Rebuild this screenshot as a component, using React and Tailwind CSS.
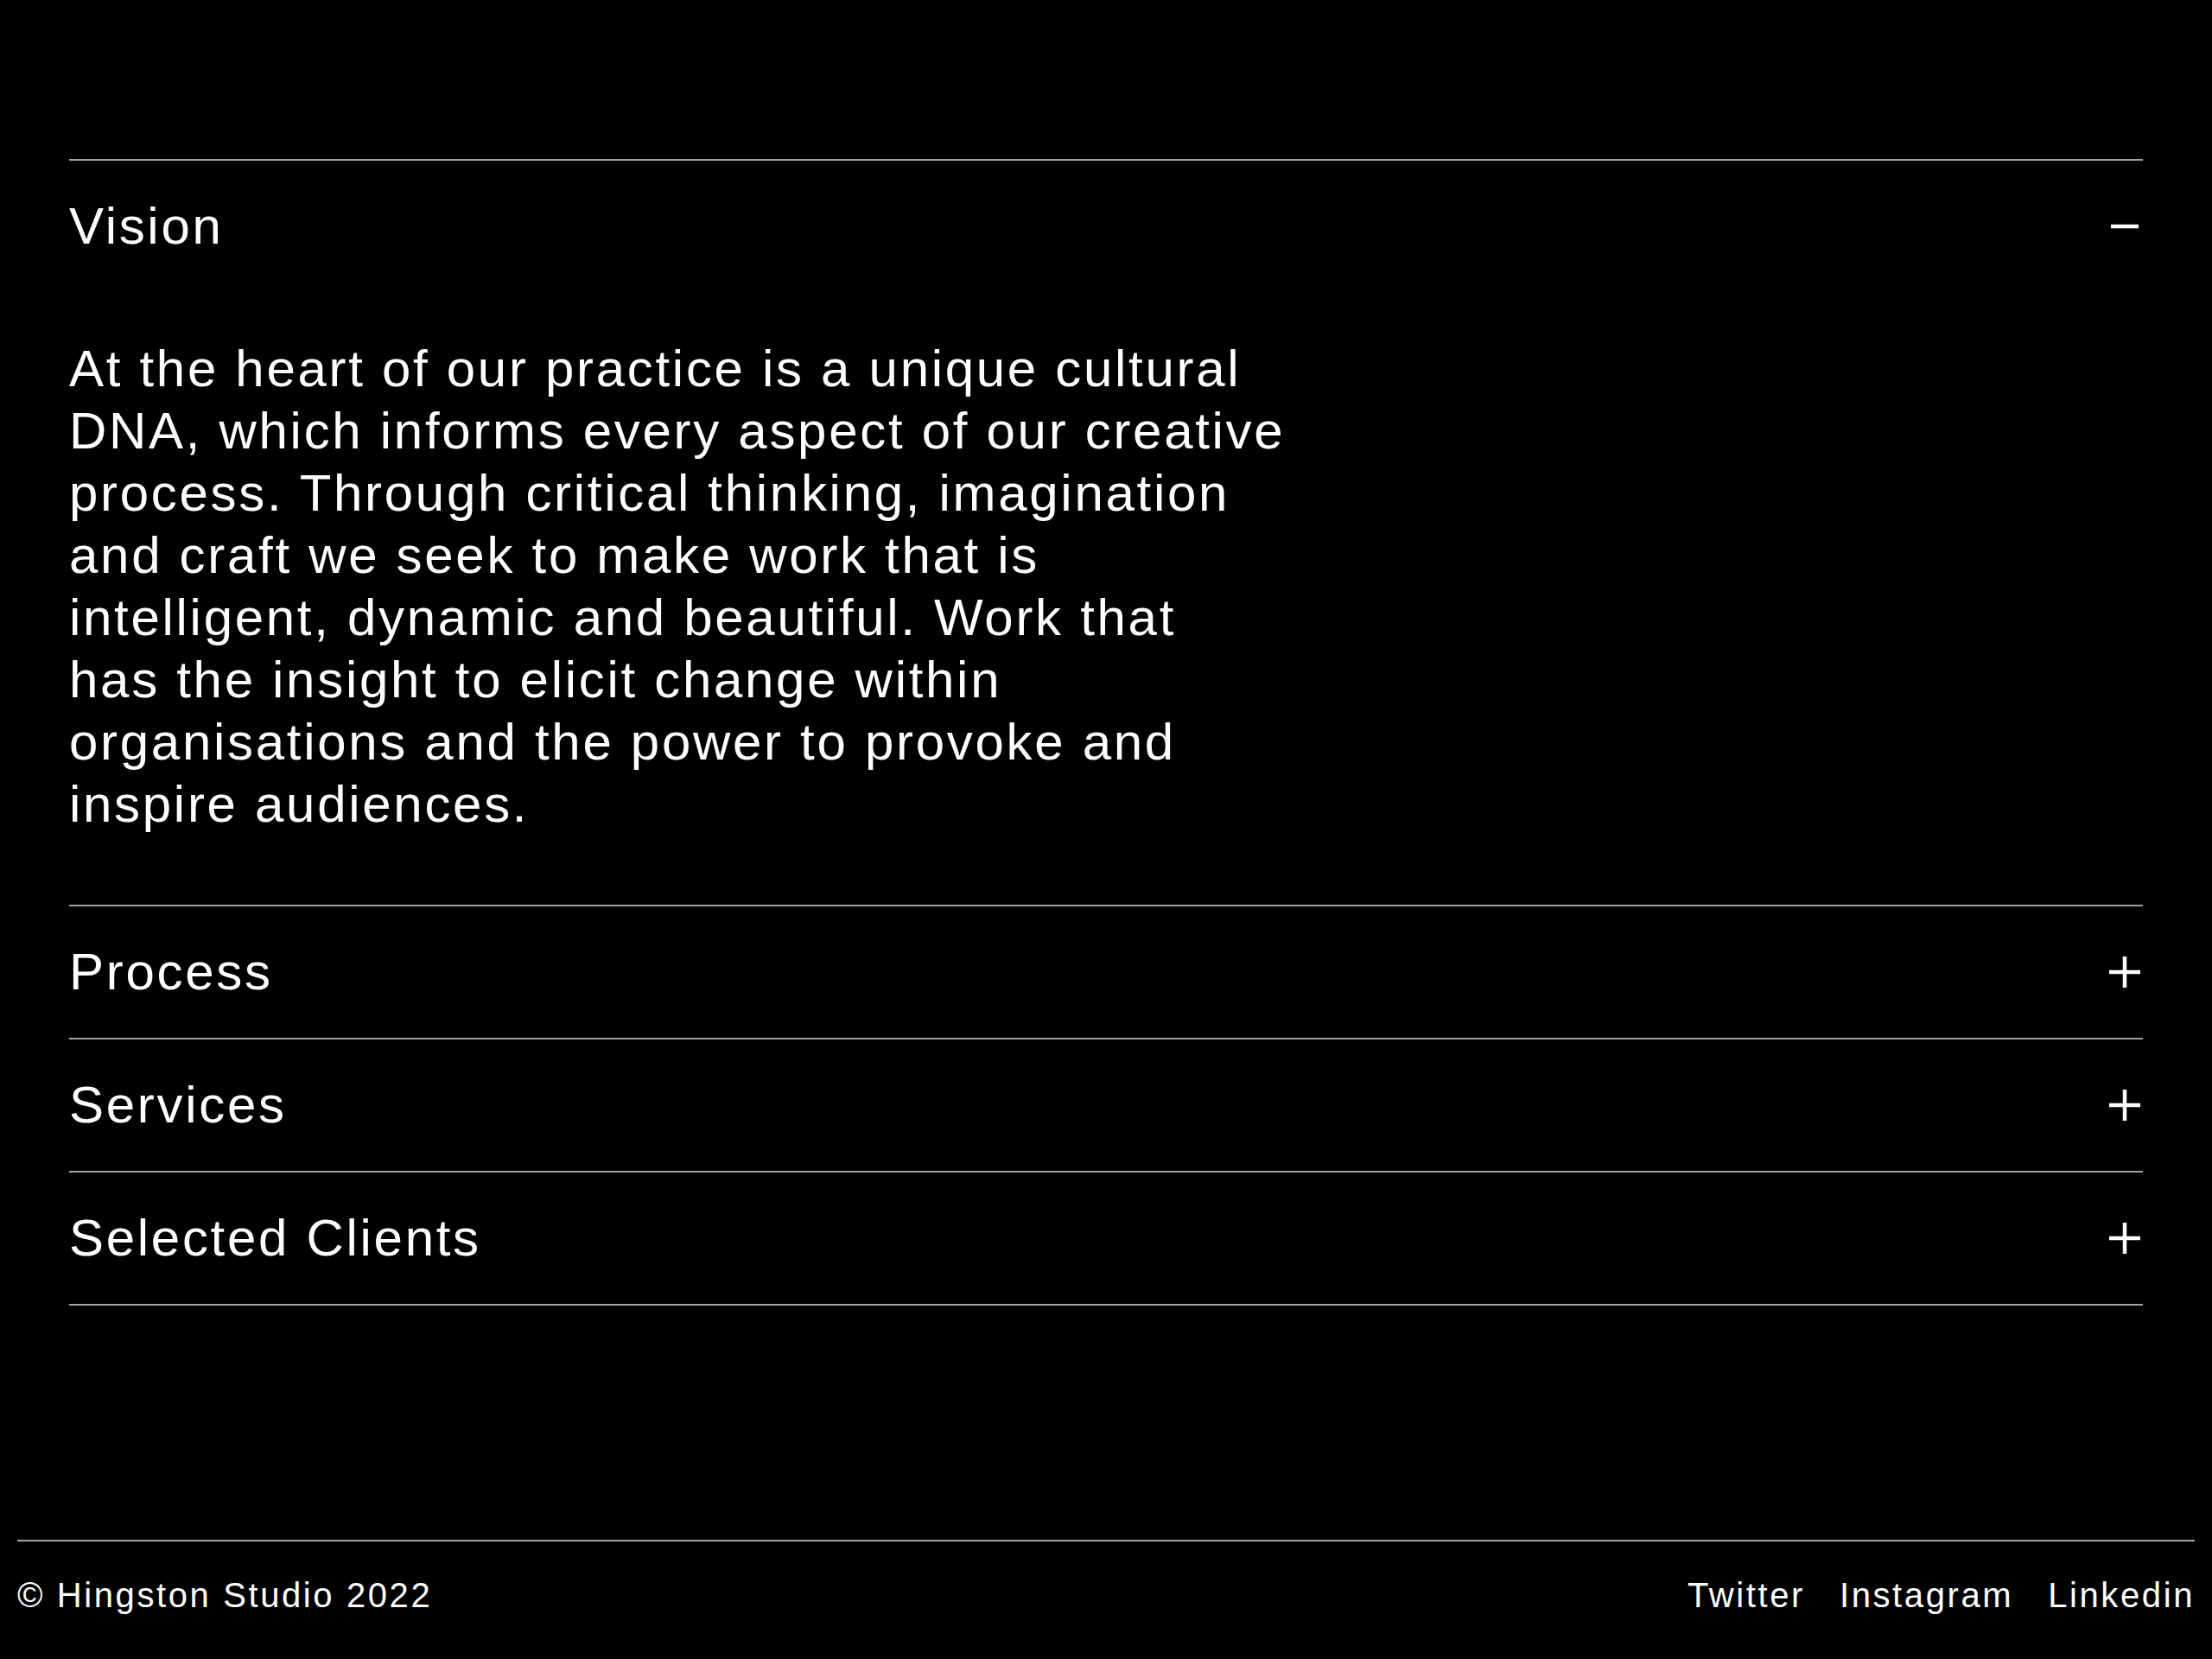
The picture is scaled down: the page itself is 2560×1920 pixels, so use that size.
import React from "react";

const lines = [
  "At the heart of our practice is a unique cultural",
  "DNA, which informs every aspect of our creative",
  "process. Through critical thinking, imagination",
  "and craft we seek to make work that is",
  "intelligent, dynamic and beautiful. Work that",
  "has the insight to elicit change within",
  "organisations and the power to provoke and",
  "inspire audiences.",
];

function Icon({ open }) {
  return (
    <svg width="40" height="40" viewBox="0 0 40 40" className="shrink-0 mr-[1px]">
      {open ? (
        <line x1="4" y1="20" x2="36" y2="20" stroke="white" strokeWidth="4.5" />
      ) : (
        <>
          <line x1="2" y1="20" x2="38" y2="20" stroke="white" strokeWidth="4.5" />
          <line x1="20" y1="2" x2="20" y2="38" stroke="white" strokeWidth="4.5" />
        </>
      )}
    </svg>
  );
}

function Item({ title, open, children }) {
  return (
    <div className="border-t-2 border-[#a3a3a3]">
      <div className="h-[152px] flex items-center justify-between">
        <span className="text-[60px] leading-[72px] tracking-[2.7px]">{title}</span>
        <Icon open={open} />
      </div>
      {children}
    </div>
  );
}

export default function App() {
  return (
    <div
      className="min-h-[1920px] bg-black text-white flex flex-col"
      style={{ fontFamily: '"Liberation Sans", Arial, sans-serif' }}
    >
      <main className="flex-1 px-20 pt-[184px]">
        <div className="border-b-2 border-[#a3a3a3]">
          <Item title="Vision" open>
            <p className="pt-[53px] pb-[80px] text-[60px] leading-[72px] tracking-[2.7px]">
              {lines.map((l, i) => (
                <span key={i} className="block whitespace-nowrap">
                  {l}
                </span>
              ))}
            </p>
          </Item>
          <Item title="Process" />
          <Item title="Services" />
          <Item title="Selected Clients" />
        </div>
      </main>
      <footer className="px-5">
        <div className="border-t-2 border-[#a3a3a3] pt-10 pb-[52px] flex items-center justify-between text-[40px] leading-[44px] tracking-[2.6px]">
          <span>© Hingston Studio 2022</span>
          <nav className="flex gap-10">
            <a>Twitter</a>
            <a>Instagram</a>
            <a>Linkedin</a>
          </nav>
        </div>
      </footer>
    </div>
  );
}
